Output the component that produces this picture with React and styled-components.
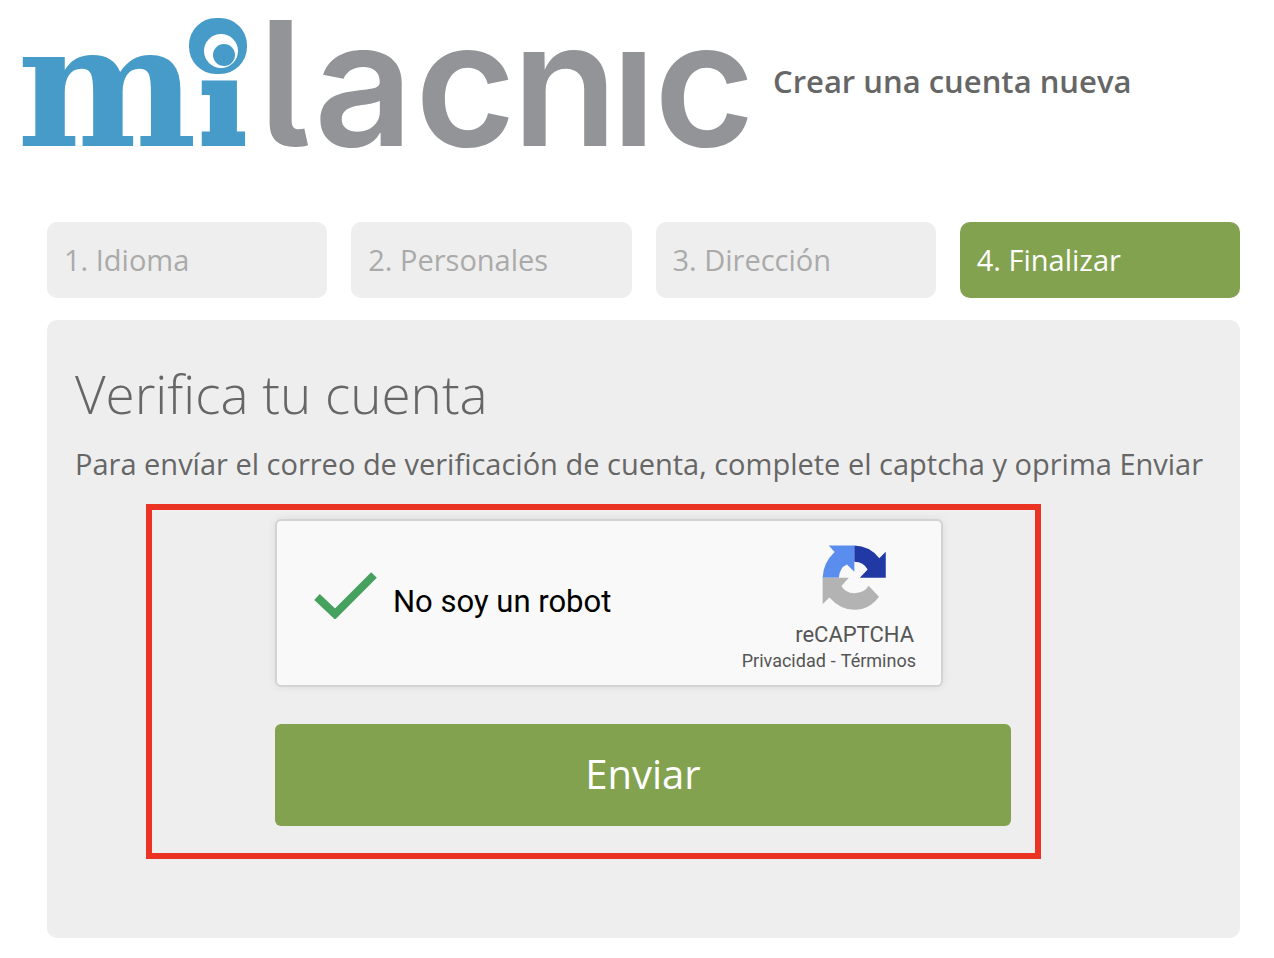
import React from "react";
import styled, { createGlobalStyle } from "styled-components";

const GlobalStyle = createGlobalStyle`
  * { box-sizing: border-box; }
  body {
    margin: 0;
    background: #fff;
    color: #666;
    font-family: "Open Sans", sans-serif;
  }
  h1, h2, p, ol { margin: 0; padding: 0; }
`;

const Page = styled.div`
  padding-bottom: 20px;
`;

const Header = styled.header`
  display: flex;
  align-items: center;
  gap: 23px;
  padding: 0 20px;
`;

const Logo = styled.svg`
  width: 730px;
  height: 162px;
  flex: none;
  overflow: visible;
`;

const PageTitle = styled.h1`
  font-size: 31px;
  line-height: 40px;
  font-weight: 600;
  white-space: nowrap;
`;

const Main = styled.main`
  padding: 60px 34px 0 47px;
`;

const Steps = styled.ol`
  display: grid;
  grid-template-columns: repeat(4, 1fr);
  gap: 24px;
  list-style: none;
`;

const Step = styled.li`
  padding: 18px 17px;
  border-radius: 10px;
  font-size: 29px;
  line-height: 40px;
  color: ${(p) => (p.$active ? "#fff" : "#aaa")};
  background: ${(p) => (p.$active ? "#82a250" : "#eee")};
`;

const Panel = styled.section`
  margin-top: 22px;
  padding: 36px 28px 79px;
  border-radius: 10px;
  background: #eee;
`;

const Heading = styled.h2`
  font-size: 53px;
  line-height: 76px;
  font-weight: 300;
`;

const Intro = styled.p`
  font-size: 29px;
  line-height: 40px;
  margin-top: 12px;
`;

const Highlight = styled.form`
  margin: 20px 171px 0 71px;
  padding: 9px 24px 27px 123px;
  border: 6px solid #ea3323;
`;

const Captcha = styled.div`
  display: flex;
  align-items: stretch;
  justify-content: space-between;
  max-width: 668px;
  height: 168px;
  padding: 23px 25px 12px 36px;
  border: 2px solid #d3d3d3;
  border-radius: 6px;
  background: #f9f9f9;
  box-shadow: 0 0 8px rgba(0, 0, 0, 0.08);
  font-family: Roboto, sans-serif;
`;

const CheckLabel = styled.label`
  display: grid;
  grid-template-columns: 64px auto;
  align-items: center;
  gap: 16px;
  padding-bottom: 13px;
  font-size: 31px;
  line-height: 40px;
  color: #000;
`;

const Checkbox = styled.input`
  appearance: none;
  grid-area: 1 / 1;
  width: 64px;
  height: 48px;
  margin: 0;
`;

const CheckMark = styled.svg`
  grid-area: 1 / 1;
  width: 64px;
  height: 48px;
  margin-bottom: 14px;
  pointer-events: none;
`;

const Brand = styled.div`
  display: flex;
  flex-direction: column;
  align-items: flex-end;
  color: #555;
`;

const BrandIcon = styled.svg`
  width: 72px;
  height: 72px;
  margin-right: 25px;
`;

const BrandName = styled.span`
  margin: 9px 2px 0 0;
  font-size: 22px;
  line-height: 28px;
`;

const BrandLinks = styled.span`
  display: flex;
  gap: 5px;
  font-size: 18px;
  line-height: 24px;
`;

const BrandLink = styled.a`
  color: inherit;
  text-decoration: none;
`;

const Submit = styled.button`
  display: block;
  width: 100%;
  height: 102px;
  margin-top: 37px;
  padding: 0 0 2px;
  border: 0;
  border-radius: 6px;
  background: #82a250;
  color: #fff;
  font: 400 40px/56px "Open Sans", sans-serif;
`;

const STEPS = ["Idioma", "Personales", "Dirección", "Finalizar"];

export default function App() {
  return (
    <>
      <GlobalStyle />
      <Page>
        <Header>
          <Logo viewBox="20 0 730 162" role="img" aria-label="milacnic">
            <g fill="#469bc8" fontFamily="DejaVu Serif, serif" fontWeight="700">
              <text x="17" y="146" fontSize="170">m</text>
              <text x="202" y="142" fontSize="110" stroke="#469bc8" strokeWidth="8">ı</text>
            </g>
            <rect x="189" y="18" width="58" height="56" rx="27" fill="#469bc8" />
            <circle cx="221" cy="51" r="17" fill="#fff" />
            <circle cx="224" cy="55" r="11" fill="#469bc8" />
            <text
              x="258 314 415 512 611 654"
              y="146"
              fill="#939498"
              fontFamily="Inter, sans-serif"
              fontWeight="600"
              fontSize="173"
              style={{ fontFeatureSettings: '"cv05"' }}
            >
              lacnıc
            </text>
          </Logo>
          <PageTitle>Crear una cuenta nueva</PageTitle>
        </Header>
        <Main>
          <Steps>
            {STEPS.map((name, i) => (
              <Step key={name} $active={i === 3} aria-current={i === 3 ? "step" : undefined}>
                {`${i + 1}. ${name}`}
              </Step>
            ))}
          </Steps>
          <Panel>
            <Heading>Verifica tu cuenta</Heading>
            <Intro>Para envíar el correo de verificación de cuenta, complete el captcha y oprima Enviar</Intro>
            <Highlight onSubmit={(e) => e.preventDefault()}>
              <Captcha>
                <CheckLabel>
                  <Checkbox type="checkbox" defaultChecked />
                  <CheckMark viewBox="0 0 64 48" aria-hidden="true">
                    <path d="M4 26 L22 43 L61 4" fill="none" stroke="#46a05e" strokeWidth="8" />
                  </CheckMark>
                  <span>No soy un robot</span>
                </CheckLabel>
                <Brand>
                  <BrandIcon viewBox="150 132 210 210" aria-hidden="true">
                    <path fill="#5b8def" d="M174 137H253V218L230 195Q207 205 205 236H155Q157 190 192 157Z" />
                    <path fill="#2139a5" d="M253 137Q300 138 330 176L350 156V236H270L294 211Q282 188 253 187Z" />
                    <path fill="#b3b3b3" d="M155 236H236L213 262Q225 284 253 284Q285 283 297 261L329 295Q300 335 253 335Q210 335 176 297L155 318Z" />
                  </BrandIcon>
                  <BrandName>reCAPTCHA</BrandName>
                  <BrandLinks>
                    <BrandLink href="#privacidad">Privacidad</BrandLink>
                    <span>-</span>
                    <BrandLink href="#terminos">Términos</BrandLink>
                  </BrandLinks>
                </Brand>
              </Captcha>
              <Submit type="submit">Enviar</Submit>
            </Highlight>
          </Panel>
        </Main>
      </Page>
    </>
  );
}
